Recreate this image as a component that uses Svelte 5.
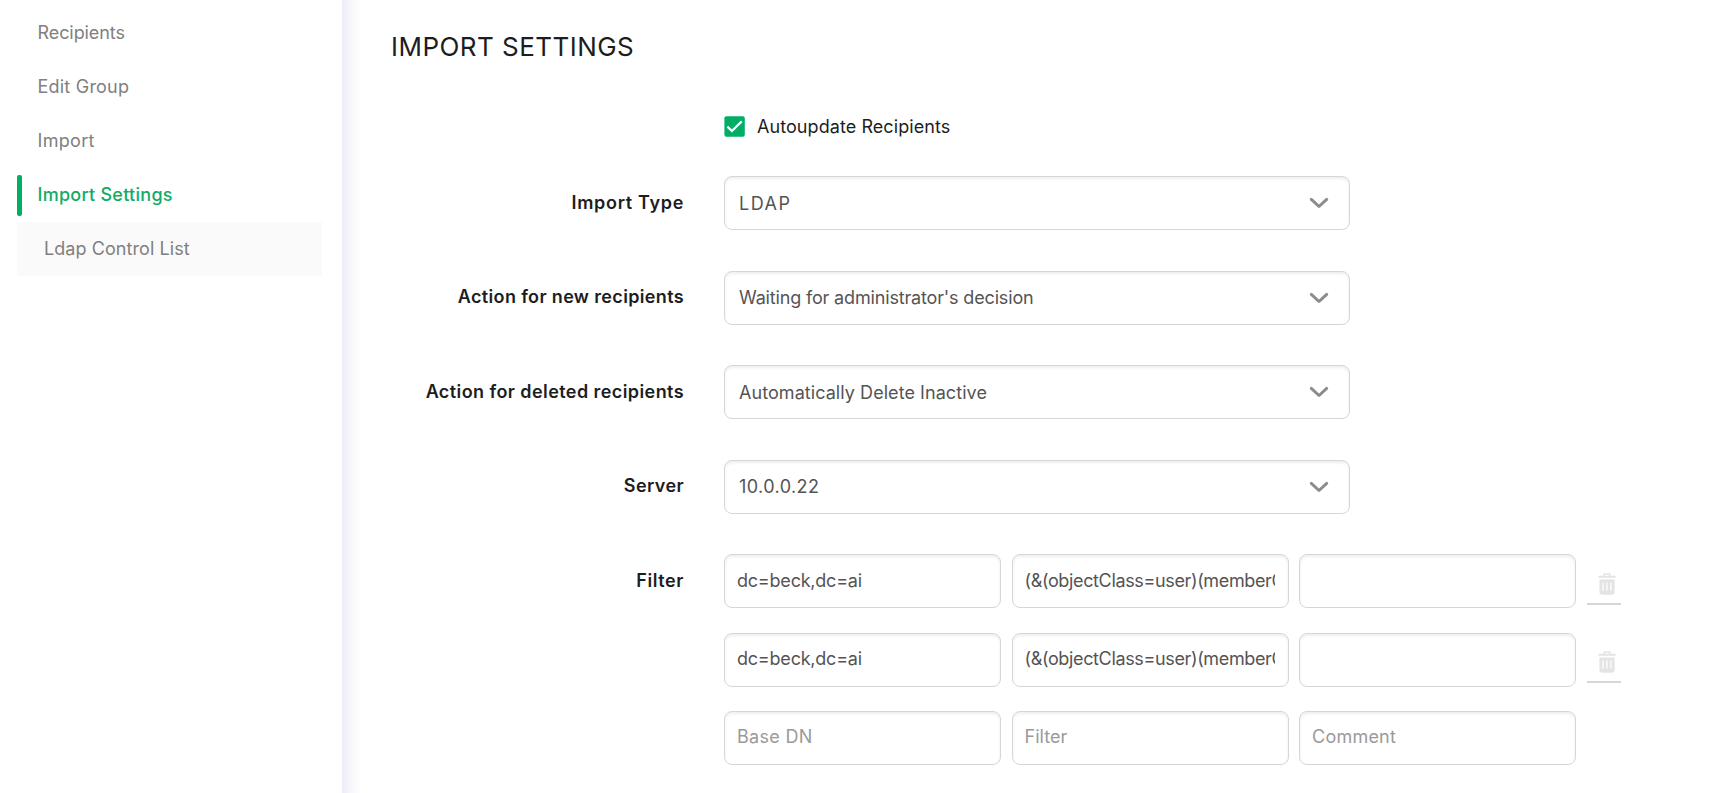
<script>
  const nav = [
    { text: 'Recipients', ls: -0.08 },
    { text: 'Edit Group', ls: 0.22 },
    { text: 'Import', ls: 0.31 },
    { text: 'Import Settings', ls: 0.27, active: true },
    { text: 'Ldap Control List', ls: 0.07, sub: true }
  ];

  const selects = [
    { label: 'Import Type', labelLs: 0.68, value: 'LDAP', ls: 1.5 },
    { label: 'Action for new recipients', labelLs: 0.35, value: "Waiting for administrator's decision", ls: -0.16 },
    { label: 'Action for deleted recipients', labelLs: 0.42, value: 'Automatically Delete Inactive', ls: 0.06 },
    { label: 'Server', labelLs: 0.4, value: '10.0.0.22', ls: 0.42 }
  ];

  const dn = { text: 'dc=beck,dc=ai', ls: -0.22 };
  const query = { text: '(&(objectClass=user)(memberOf', ls: -0.36 };
  const rows = [
    { cells: [dn, query, { text: '', ls: 0 }], removable: true },
    { cells: [dn, query, { text: '', ls: 0 }], removable: true },
    {
      cells: [
        { text: 'Base DN', ls: 0.3 },
        { text: 'Filter', ls: 0.04 },
        { text: 'Comment', ls: 0.23 }
      ],
      placeholder: true
    }
  ];
</script>

<div class="page">
  <nav class="sidebar">
    {#each nav as item}
      <a class="nav-item" class:active={item.active} class:sub={item.sub} style:letter-spacing="{item.ls}px">{item.text}</a>
    {/each}
  </nav>

  <main class="content">
    <h1>IMPORT SETTINGS</h1>

    <div class="check-row">
      <svg class="checkbox" viewBox="0 0 21 21" width="21" height="21">
        <rect x="0.4" y="0.2" width="20.4" height="20.6" rx="2" fill="#00ae66" />
        <path d="M3.4 10.6 7.9 15l9.8-9.6" fill="none" stroke="#fff" stroke-width="2.3" />
      </svg>
      <span>Autoupdate Recipients</span>
    </div>

    {#each selects as field}
      <div class="field">
        <span class="label" style:letter-spacing="{field.labelLs}px">{field.label}</span>
        <div class="box select">
          <span class="value" style:letter-spacing="{field.ls}px">{field.value}</span>
          <svg viewBox="0 0 20 12" width="20" height="12">
            <path d="M2.3 2.4 10 9.5l7.7-7.1" fill="none" stroke="#8c8c8c" stroke-width="3" stroke-linecap="round" stroke-linejoin="round" />
          </svg>
        </div>
      </div>
    {/each}

    <div class="field filter">
      <span class="label filter-label">Filter</span>
      <div class="rows">
        {#each rows as row}
          <div class="filter-row">
            {#each row.cells as cell}
              <div class="box input" class:placeholder={row.placeholder}>
                <span class="value" style:letter-spacing="{cell.ls}px">{cell.text}</span>
              </div>
            {/each}
            {#if row.removable}
              <span class="trash">
                <svg viewBox="0 0 18 22" width="18" height="22">
                  <path d="M6 3V1.6Q6 1 6.6 1h4.8q.6 0 .6.6V3" fill="none" stroke="#e4e4e4" stroke-width="1.4" />
                  <rect x="0.2" y="2.7" width="17.6" height="2" rx="0.7" fill="#e4e4e4" />
                  <path d="M1.4 6.6h15.2v12.2q0 2.9-2.9 2.9H4.3q-2.9 0-2.9-2.9z" fill="#e4e4e4" />
                  <path d="M5.1 9.4v8.4M9 9.4v8.4M12.9 9.4v8.4" stroke="#fff" stroke-width="1.2" />
                </svg>
              </span>
            {/if}
          </div>
        {/each}
      </div>
    </div>
  </main>
</div>

<style>
  :global(body) {
    margin: 0;
    overflow: hidden;
    background: #fff;
  }
  .page {
    display: flex;
    height: 793px;
    overflow: hidden;
    font: 400 18px/22px Inter, 'Open Sans', sans-serif;
    color: #1d1d1f;
  }
  .sidebar {
    box-sizing: border-box;
    width: 342px;
    flex: none;
    display: flex;
    flex-direction: column;
    padding: 6px 20px 0 17px;
  }
  .nav-item {
    position: relative;
    display: block;
    height: 54px;
    box-sizing: border-box;
    padding-left: 20.5px;
    line-height: 53px;
    color: #808080;
    white-space: nowrap;
  }
  .nav-item.active {
    color: #12ab66;
    font-weight: 500;
  }
  .nav-item.active::before {
    content: '';
    position: absolute;
    left: 0;
    top: 7px;
    width: 5px;
    height: 41px;
    border-radius: 2px;
    background: #00ae66;
  }
  .nav-item.sub {
    padding-left: 27px;
    background: #fafafa;
  }
  .content {
    flex: 1;
    min-width: 0;
    display: flex;
    flex-direction: column;
    box-sizing: border-box;
    padding: 31px 0 0 48px;
    background: linear-gradient(90deg, #eeeff6 0, #f1f2f8 5px, #fafafd 12px, #fff 19px);
  }
  h1 {
    margin: 0;
    padding-left: 1px;
    font-size: 26px;
    line-height: 32px;
    font-weight: 400;
    letter-spacing: 0.46px;
  }
  .check-row {
    display: flex;
    align-items: flex-start;
    gap: 12px;
    height: 22px;
    margin: 53px 0 38px 334px;
  }
  .check-row span {
    letter-spacing: 0.07px;
  }
  .checkbox {
    display: block;
  }
  .field {
    display: flex;
    height: 54px;
    margin-bottom: 40.5px;
  }
  .label {
    box-sizing: border-box;
    width: 334px;
    flex: none;
    margin-top: -0.2px;
    padding-right: 40px;
    text-align: right;
    line-height: 53px;
    font-weight: 600;
    white-space: nowrap;
  }
  .filter-label {
    letter-spacing: 0.58px;
  }
  .box {
    display: flex;
    align-items: center;
    box-sizing: border-box;
    height: 54px;
    border: 1px solid #d6d6d6;
    border-radius: 8px;
    background: #fff;
    box-shadow: inset 0 2px 3px rgba(0, 0, 0, 0.07);
    color: #545454;
  }
  .value {
    flex: 1;
    min-width: 0;
    overflow: hidden;
    white-space: nowrap;
  }
  .select {
    width: 626px;
    padding: 0 20px 0 14px;
  }
  .select .value {
    padding-top: 1px;
  }
  .filter {
    height: auto;
    margin-bottom: 0;
  }
  .rows {
    display: flex;
    flex-direction: column;
    gap: 24.5px;
  }
  .filter-row {
    display: flex;
    gap: 10.5px;
  }
  .input {
    width: 277px;
    padding: 0 13px 1px 12px;
  }
  .placeholder {
    padding-bottom: 2px;
    color: #9a9a9a;
  }
  .trash {
    display: flex;
    justify-content: flex-end;
    box-sizing: border-box;
    width: 34px;
    height: 50.5px;
    padding: 18.5px 4.5px 0 0;
    border-bottom: 2px solid #d6d6d6;
  }
</style>
